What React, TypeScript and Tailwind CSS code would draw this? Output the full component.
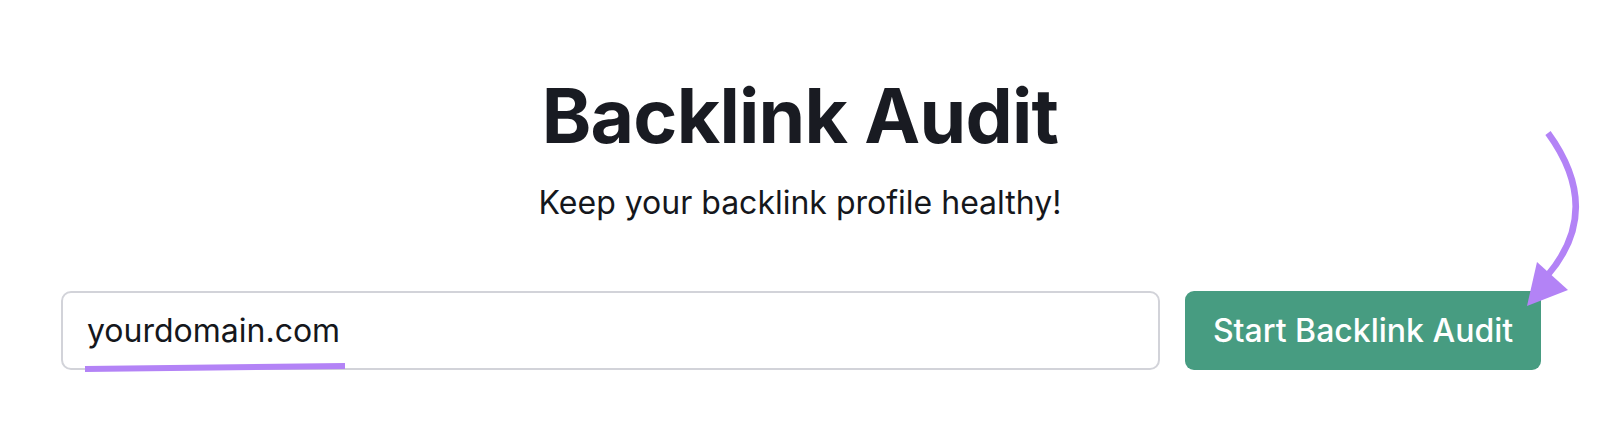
import { useState } from 'react'

export default function App() {
  const [domain, setDomain] = useState('yourdomain.com')

  return (
    <div className="relative w-[1600px] h-[431px] bg-white overflow-hidden" style={{ fontFamily: 'Inter, "Noto Sans", sans-serif' }}>
      <div className="flex flex-col items-center pt-[78px]">
        <h1 className="text-[75px] leading-none font-bold tracking-[-0.01em] text-[#191b22]">Backlink Audit</h1>
        <p className="mt-[34px] text-[32px] leading-none text-[#15171c]">Keep your backlink profile healthy!</p>
      </div>

      <div className="flex items-stretch gap-[25px] pl-[61px] pr-[59px] mt-[72px]">
        <input
          value={domain}
          onChange={e => setDomain(e.target.value)}
          className="flex-1 h-[79px] px-[24px] border-2 border-[#d2d3d9] rounded-[10px] text-[32px] text-[#15171c] outline-none"
        />
        <button className="w-[356px] h-[79px] rounded-[9px] bg-[#479c81] text-white text-[32px] font-medium">
          Start Backlink Audit
        </button>
      </div>

      {/* annotations */}
      <svg className="absolute inset-0 pointer-events-none" width="1600" height="431" viewBox="0 0 1600 431">
        <line x1="85" y1="369" x2="345" y2="366" stroke="#b383f6" strokeWidth="6" />
        <path d="M1548 133 Q1604 210 1547 276" fill="none" stroke="#b383f6" strokeWidth="6.5" />
        <polygon points="1537,262 1568,290 1527,306" fill="#b383f6" />
      </svg>
    </div>
  )
}
